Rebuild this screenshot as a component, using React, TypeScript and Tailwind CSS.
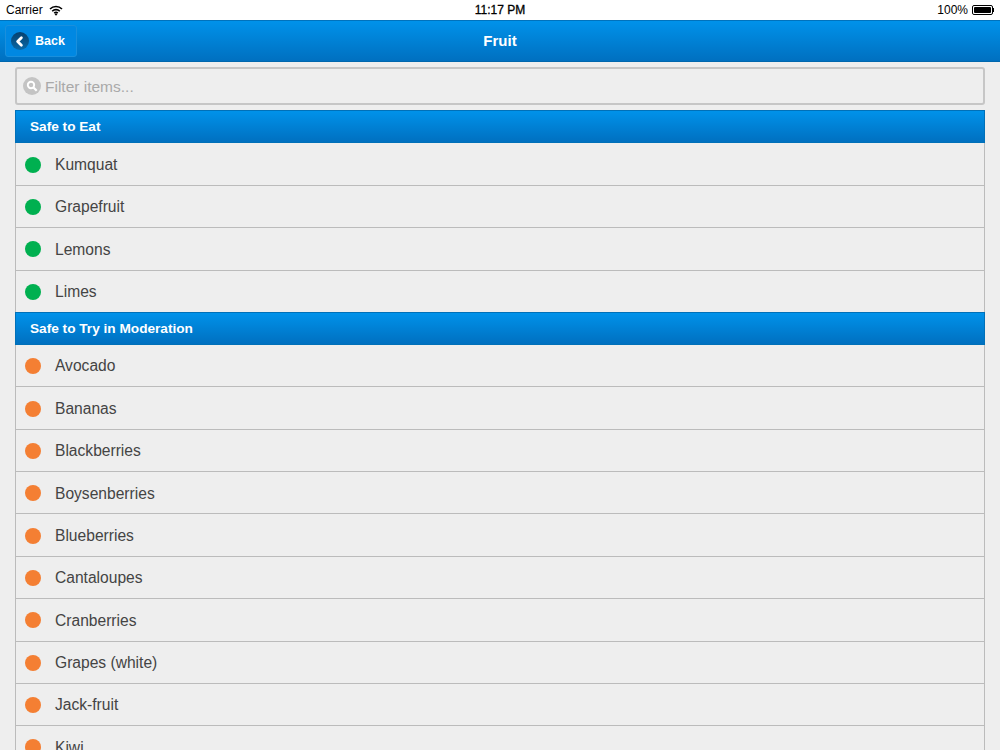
import { ChevronLeft } from 'lucide-react'

const sections = [
  { title: 'Safe to Eat', dot: 'bg-[#00b050]', items: ['Kumquat', 'Grapefruit', 'Lemons', 'Limes'] },
  {
    title: 'Safe to Try in Moderation',
    dot: 'bg-[#f47f33]',
    items: ['Avocado', 'Bananas', 'Blackberries', 'Boysenberries', 'Blueberries', 'Cantaloupes', 'Cranberries', 'Grapes (white)', 'Jack-fruit', 'Kiwi'],
  },
]

function StatusBar() {
  return (
    <div className="relative flex h-5 items-center justify-between bg-white px-1.5 text-[12px] text-black">
      <div className="flex items-center gap-[6px]">
        <span>Carrier</span>
        <svg width="14" height="11" viewBox="0 0 14 11" fill="none" stroke="black" strokeWidth="1.6">
          <path d="M1 4a8.5 8.5 0 0 1 12 0" />
          <path d="M3.2 6.2a5.4 5.4 0 0 1 7.6 0" />
          <path d="M5.2 8.2a2.6 2.6 0 0 1 3.6 0" />
          <path d="M7 10.8 5.6 9.3a2 2 0 0 1 2.8 0z" fill="black" stroke="none" />
        </svg>
      </div>
      <span className="absolute inset-x-0 text-center [-webkit-text-stroke:0.3px_black]">11:17 PM</span>
      <div className="flex items-center gap-1">
        <span>100%</span>
        <div className="flex items-center">
          <div className="h-[10px] w-[21px] rounded-[2px] border border-black p-[1px]">
            <div className="h-full w-full rounded-[1px] bg-black" />
          </div>
          <div className="h-1 w-[1px] bg-black" />
        </div>
      </div>
    </div>
  )
}

function NavBar() {
  return (
    <div className="relative flex h-[42px] items-center border-t border-b border-t-[#0072bc] border-b-[#0067ad] bg-gradient-to-b from-[#0092ea] to-[#0070c0] px-[5px]">
      <div className="flex h-[32px] w-[72px] items-center gap-[6px] rounded-[3px] border border-[#1a8fdc] bg-[#0088e2] pl-[5px] text-[12.5px] font-bold text-white">
        <div className="flex h-[18px] w-[18px] items-center justify-center rounded-full bg-gradient-to-b from-[#06406e] to-[#0a6aa8]">
          <ChevronLeft size={15} strokeWidth={4.5} className="-ml-[2px]" />
        </div>
        <span>Back</span>
      </div>
      <div className="absolute inset-x-0 text-center text-[15px] font-bold text-white">Fruit</div>
    </div>
  )
}

function FilterBox() {
  return (
    <div className="flex h-[38px] items-center gap-[4px] rounded-[3px] border-2 border-[#c6c6c6] bg-[#eeeeee] pl-[6px] text-[15.5px] text-[#a9a9a9]">
      <div className="flex h-[18px] w-[18px] items-center justify-center rounded-full bg-[#c4c4c4]">
        <svg width="12" height="12" viewBox="0 0 12 12" fill="none" stroke="white">
          <circle cx="5" cy="5" r="3.2" strokeWidth="1.9" />
          <path d="M7.5 7.5l3.2 3.2" strokeWidth="2.2" />
        </svg>
      </div>
      <span className="pt-[1px]">Filter items...</span>
    </div>
  )
}

function Section({ title, dot, items }: { title: string; dot: string; items: string[] }) {
  return (
    <div>
      <div className="flex h-[33.4px] items-center border border-[#0070b8] bg-gradient-to-b from-[#0092ea] to-[#0070c0] pt-[2px] pl-[14px] text-[13.65px] font-bold text-white">
        {title}
      </div>
      {items.map((item) => (
        <div
          key={item}
          className="flex h-[42.375px] items-center gap-[14px] border-x border-b border-[#bbbbbb] pt-[1px] pl-[9px] text-[15.6px] text-[#444444] last:h-[41.075px] last:border-b-0"
        >
          <span className={`h-4 w-4 rounded-full ${dot}`} />
          <span>{item}</span>
        </div>
      ))}
    </div>
  )
}

export default function App() {
  return (
    <div className="h-[750px] w-[1000px] overflow-hidden bg-[#eeeeee] font-['Liberation_Sans',Arial,sans-serif]">
      <StatusBar />
      <NavBar />
      <div className="px-[15px] pt-[5px]">
        <FilterBox />
        <div className="mt-[5px]">
          {sections.map((s) => (
            <Section key={s.title} title={s.title} dot={s.dot} items={s.items} />
          ))}
        </div>
      </div>
    </div>
  )
}
